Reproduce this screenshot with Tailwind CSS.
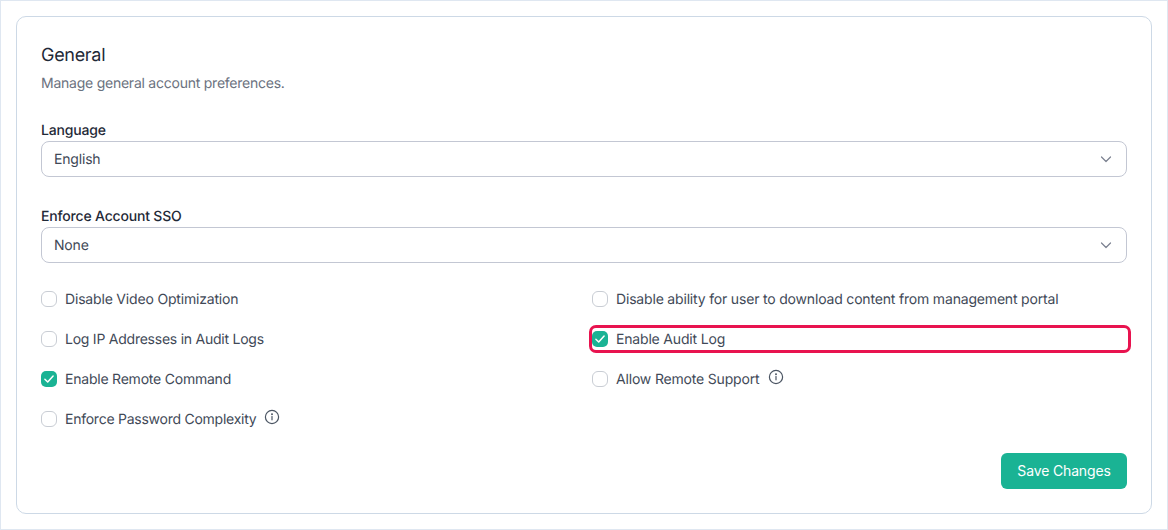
<!DOCTYPE html>
<html>
<head>
<meta charset="utf-8">
<script src="https://cdn.jsdelivr.net/npm/@tailwindcss/browser@4"></script>
</head>
<body class="bg-white">
<div class="w-[1168px] h-[530px] overflow-hidden border border-[#dfe7f1] p-[15px] font-['Inter',sans-serif] text-[14px] tracking-[-0.18px] text-[#414957] [text-rendering:geometricPrecision]">
  <div class="h-[498px] rounded-[10px] border border-[#cdd9e6] px-6 pt-[27px] flex flex-col">
    <h2 class="text-[18px] leading-6 tracking-[-0.3px] text-[#1f2937]">General</h2>
    <p class="mt-[6px] leading-5 tracking-[-0.24px] text-[#6b7280]">Manage general account preferences.</p>

    <div class="mt-[27px] text-[#1f2937] font-medium leading-[20px]">Language</div>
    <div class="h-9 rounded-lg border border-[#c3c7d3] px-3 flex items-center justify-between">
      <span>English</span>
      <svg class="w-[14px] h-[14px] mr-[1px] text-[#7b8190]" viewBox="0 0 14 14" fill="none" stroke="currentColor" stroke-width="1.2" stroke-linecap="round" stroke-linejoin="round"><path d="M2.5 5l4.5 4.5L11.5 5"/></svg>
    </div>

    <div class="mt-[30px] text-[#1f2937] font-medium leading-[20px]">Enforce Account SSO</div>
    <div class="h-9 rounded-lg border border-[#c3c7d3] px-3 flex items-center justify-between">
      <span>None</span>
      <svg class="w-[14px] h-[14px] mr-[1px] text-[#7b8190]" viewBox="0 0 14 14" fill="none" stroke="currentColor" stroke-width="1.2" stroke-linecap="round" stroke-linejoin="round"><path d="M2.5 5l4.5 4.5L11.5 5"/></svg>
    </div>

    <div class="mt-[16px] grid grid-cols-[551px_1fr] auto-rows-[40px]">
      <div class="flex items-center gap-2">
        <span class="w-4 h-4 rounded-[6px] border border-[#c9cdd4] bg-white"></span>
        <span>Disable Video Optimization</span>
      </div>
      <div class="flex items-center gap-2">
        <span class="w-4 h-4 rounded-[6px] border border-[#c9cdd4] bg-white"></span>
        <span>Disable ability for user to download content from management portal</span>
      </div>

      <div class="flex items-center gap-2">
        <span class="w-4 h-4 rounded-[6px] border border-[#c9cdd4] bg-white"></span>
        <span class="tracking-[-0.24px]">Log IP Addresses in Audit Logs</span>
      </div>
      <div class="relative flex items-center gap-2">
        <span class="w-4 h-4 rounded-[5px] bg-[#1ab394] flex items-center justify-center">
          <svg class="w-3 h-3" viewBox="0 0 12 12" fill="none" stroke="white" stroke-width="1.5" stroke-linecap="round" stroke-linejoin="round"><path d="M1.9 6.3l2.8 2.7 5.4-6"/></svg>
        </span>
        <span>Enable Audit Log</span>
        <div class="absolute left-[-3px] top-[6px] w-[542px] h-[28px] rounded-[7px] border-[3px] border-[#e8134f]"></div>
      </div>

      <div class="flex items-center gap-2">
        <span class="w-4 h-4 rounded-[5px] bg-[#1ab394] flex items-center justify-center">
          <svg class="w-3 h-3" viewBox="0 0 12 12" fill="none" stroke="white" stroke-width="1.5" stroke-linecap="round" stroke-linejoin="round"><path d="M1.9 6.3l2.8 2.7 5.4-6"/></svg>
        </span>
        <span class="tracking-[-0.22px]">Enable Remote Command</span>
      </div>
      <div class="flex items-center gap-2">
        <span class="w-4 h-4 rounded-[6px] border border-[#c9cdd4] bg-white"></span>
        <span>Allow Remote Support</span>
        <svg class="w-4 h-4 ml-[1px] mb-[4px] text-[#4b5563]" viewBox="0 0 16 16" fill="none" stroke="currentColor" stroke-width="1.2" stroke-linecap="round"><circle cx="8" cy="8" r="6.6"/><path d="M8 7.6v3.2"/><circle cx="8" cy="5.2" r="0.4" fill="currentColor"/></svg>
      </div>

      <div class="flex items-center gap-2">
        <span class="w-4 h-4 rounded-[6px] border border-[#c9cdd4] bg-white"></span>
        <span class="tracking-[-0.25px]">Enforce Password Complexity</span>
        <svg class="w-4 h-4 ml-[0px] mb-[4px] text-[#4b5563]" viewBox="0 0 16 16" fill="none" stroke="currentColor" stroke-width="1.2" stroke-linecap="round"><circle cx="8" cy="8" r="6.6"/><path d="M8 7.6v3.2"/><circle cx="8" cy="5.2" r="0.4" fill="currentColor"/></svg>
      </div>
    </div>

    <div class="mt-[14px] flex justify-end">
      <button class="w-[126px] h-9 pb-[1px] rounded-md bg-[#1ab394] text-white tracking-[-0.15px]">Save Changes</button>
    </div>
  </div>
</div>
</body>
</html>
